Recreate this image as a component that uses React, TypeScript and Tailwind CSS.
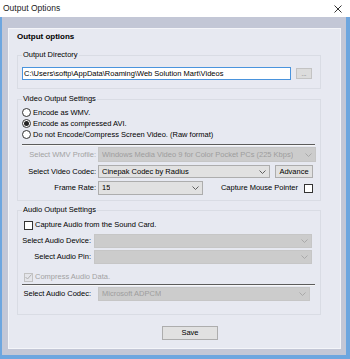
import React from 'react';
import clsx from 'clsx';

function Chevron({ disabled }: { disabled?: boolean }) {
  return (
    <svg width="7" height="4" viewBox="0 0 7 4" className="shrink-0">
      <polyline
        points="0.5,0.5 3.5,3.5 6.5,0.5"
        fill="none"
        stroke={disabled ? '#a9a9a9' : '#5f5f5f'}
        strokeWidth="1"
      />
    </svg>
  );
}

function Combo({ value, disabled, className }: { value?: string; disabled?: boolean; className?: string }) {
  return (
    <div
      className={clsx(
        'flex items-center justify-between border pl-[3px] pr-[3px]',
        disabled ? 'bg-[#cccccc] border-[#c6c6c6] text-[#9d9d9d]' : 'bg-[#e1e1e1] border-[#adadad] text-black',
        className
      )}
    >
      <span className="truncate">{value}</span>
      <Chevron disabled={disabled} />
    </div>
  );
}

function Group({ title, className, children }: { title: string; className?: string; children: React.ReactNode }) {
  return (
    <fieldset className={clsx('ml-[0px] w-[304px] border border-[#d9dce4] pl-[4px]', className)}>
      <legend className="h-[10px] px-[1px] leading-[10px]">{title}</legend>
      {children}
    </fieldset>
  );
}

function Radio({ label, checked }: { label: string; checked?: boolean }) {
  return (
    <div className="flex h-[11px] items-center gap-[2px]">
      <span className="flex h-[9px] w-[9px] items-center justify-center rounded-full border border-[#333333] bg-white">
        {checked && <span className="h-[5px] w-[5px] rounded-full bg-[#222222]" />}
      </span>
      <span>{label}</span>
    </div>
  );
}

function Check({ checked, disabled }: { checked?: boolean; disabled?: boolean }) {
  return (
    <span
      className={clsx(
        'flex h-[9px] w-[9px] shrink-0 items-center justify-center border',
        disabled ? 'border-[#c2c2c2] bg-[#e4e5ea]' : 'border-[#333333] bg-white'
      )}
    >
      {checked && (
        <svg width="7" height="6" viewBox="0 0 7 6">
          <polyline points="0.5,3 2.5,5 6.5,0.5" fill="none" stroke={disabled ? '#b0b0b0' : '#222222'} strokeWidth="1" />
        </svg>
      )}
    </span>
  );
}

function Separator({ className }: { className?: string }) {
  return <div className={clsx('h-[2px] w-[293px] border-t border-b border-t-[#5c5c5c] border-b-[#f7f7f7]', className)} />;
}

export default function App() {
  return (
    <div className="flex h-[359px] w-[350px] flex-col overflow-hidden bg-white font-['Liberation_Sans',Arial,sans-serif] text-[7.5px] text-black">
      {/* title bar */}
      <div className="flex h-[17px] shrink-0 items-center justify-between bg-white pl-[3px] pr-[8px]">
        <span className="text-[8.5px] text-[#1b1b1b]">Output Options</span>
        <svg width="8" height="8" viewBox="0 0 8 8">
          <path d="M0.5 0.5 L7.5 7.5 M7.5 0.5 L0.5 7.5" stroke="#333333" strokeWidth="1" />
        </svg>
      </div>

      {/* client area */}
      <div className="flex flex-1 flex-col border-b-[4px] border-l-2 border-r-[4px] border-[#6da6df] bg-[#c3c7d6] pb-[6px] pl-[6px] pr-[5px] pt-[11px]">
        <div className="flex flex-1 flex-col border border-[#f4f5f9] bg-[#e7e9f1] pl-[8px] pt-[3px]">
          <div className="h-[10px] text-[8px] font-bold leading-[10px]">Output options</div>

          <Group title="Output Directory" className="mt-[8px] pb-[8px]">
            <div className="mt-[7px] flex items-center">
              <div className="flex h-[13px] w-[269px] items-center border border-[#4a94dd] bg-white pl-[1px]">
                C:\Users\softp\AppData\Roaming\Web Solution Mart\Videos
              </div>
              <div className="ml-[5px] flex h-[11px] w-[16px] items-end justify-center border border-[#c3c3c3] bg-[#dcdcdc] pb-[1px] text-[6px] leading-[6px] text-[#555555]">
                ...
              </div>
            </div>
          </Group>

          <Group title="Video Output Settings" className="mt-[5px] pb-[5px]">
            <div className="mt-[3px] flex flex-col">
              <Radio label="Encode as WMV." />
              <Radio label="Encode as compressed AVI." checked />
              <Radio label="Do not Encode/Compress Screen Video. (Raw format)" />
            </div>
            <Separator className="mt-[4px]" />
            <div className="mt-[1px] flex h-[15px] items-center">
              <span className="w-[74px] text-right text-[#a2a2a2]">Select WMV Profile:</span>
              <Combo
                disabled
                value="Windows Media Video 9 for Color Pocket PCs (225 Kbps)"
                className="ml-[2px] h-[15px] w-[218px]"
              />
            </div>
            <div className="mt-[3px] flex h-[13px] items-center">
              <span className="w-[74px] text-right">Select Video Codec:</span>
              <Combo value="Cinepak Codec by Radius" className="ml-[2px] h-[13px] w-[172px]" />
              <div className="ml-[5px] flex h-[13px] w-[38px] items-center justify-center border border-[#adadad] bg-[#e1e1e1]">
                Advance
              </div>
            </div>
            <div className="mt-[3px] flex h-[14px] items-center">
              <span className="w-[74px] text-right">Frame Rate:</span>
              <Combo value="15" className="ml-[2px] h-[14px] w-[105px]" />
              <div className="mr-[7px] flex flex-1 items-center justify-end gap-[6px]">
                <span>Capture Mouse Pointer</span>
                <Check />
              </div>
            </div>
          </Group>

          <Group title="Audio Output Settings" className="mt-[4px] pb-[13px]">
            <div className="ml-[2px] mt-[5px] flex h-[10px] items-center gap-[2px]">
              <Check />
              <span>Capture Audio from the Sound Card.</span>
            </div>
            <div className="mt-[4px] flex h-[14px] items-center">
              <span className="w-[69px] text-right">Select Audio Device:</span>
              <Combo disabled className="ml-[3px] h-[14px] w-[218px]" />
            </div>
            <div className="mt-[2px] flex h-[14px] items-center">
              <span className="w-[69px] text-right">Select Audio Pin:</span>
              <Combo disabled className="ml-[3px] h-[14px] w-[218px]" />
            </div>
            <div className="ml-[2px] mt-[8px] flex h-[10px] items-center gap-[2px]">
              <Check checked disabled />
              <span className="text-[#a2a2a2]">Compress Audio Data.</span>
            </div>
            <Separator className="mt-[2px]" />
            <div className="mt-[1px] flex h-[14px] items-center">
              <span className="w-[69px] text-right">Select Audio Codec:</span>
              <Combo disabled value="Microsoft ADPCM" className="ml-[7px] h-[14px] w-[212px]" />
            </div>
          </Group>

          <div className="ml-[145px] mt-[11px] flex h-[14px] w-[56px] items-center justify-center border border-[#adadad] bg-[#e1e1e1]">
            Save
          </div>
        </div>
      </div>
    </div>
  );
}
